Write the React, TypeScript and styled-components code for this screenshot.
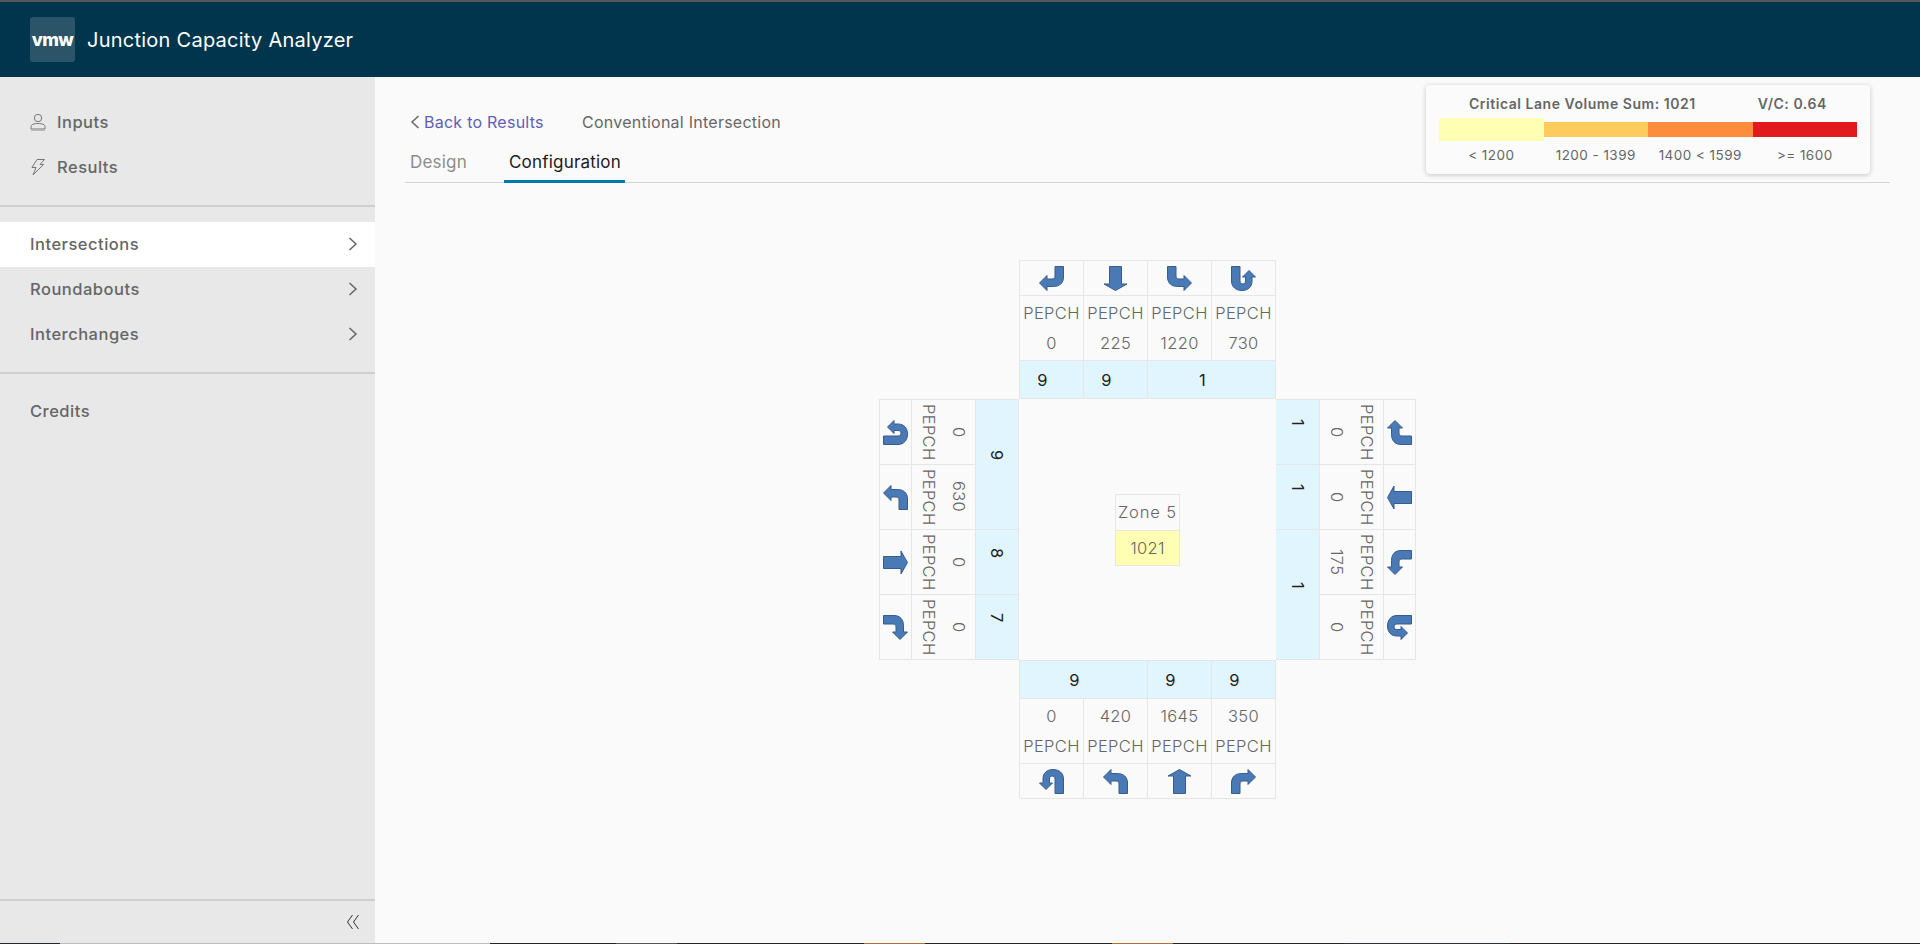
import React from 'react';
import styled, { createGlobalStyle } from 'styled-components';

const GlobalStyle = createGlobalStyle`
  html, body {
    margin: 0;
    padding: 0;
    height: 100%;
    background: #fafafa;
    font-family: 'Inter', 'Liberation Sans', sans-serif;
  }
  * {
    box-sizing: border-box;
  }
`;

const Page = styled.div`
  display: flex;
  flex-direction: column;
  height: 944px;
  overflow: hidden;
`;

const Header = styled.header`
  display: flex;
  align-items: center;
  gap: 12px;
  height: 77px;
  padding: 0 30px;
  background: #00364d;
  border-top: 2px solid #565656;
`;

const Logo = styled.div`
  display: flex;
  align-items: center;
  justify-content: center;
  width: 45px;
  height: 45px;
  border-radius: 3px;
  background: #2b5468;
  color: #fff;
  font-size: 18px;
  font-weight: 800;
  letter-spacing: -0.6px;
`;

const Title = styled.div`
  color: #fff;
  font-size: 20px;
  font-weight: 400;
  letter-spacing: 0.25px;
`;

const Body = styled.div`
  display: flex;
  flex: 1;
  min-height: 0;
`;

const Sidebar = styled.nav`
  display: flex;
  flex-direction: column;
  flex: 0 0 375px;
  background: #e8e8e8;
`;

const NavGroup = styled.div<{ $pad: string }>`
  display: flex;
  flex-direction: column;
  padding: ${(p) => p.$pad};
  border-bottom: 2px solid #cfcfcf;
`;

const NavItem = styled.div<{ $active?: boolean }>`
  display: flex;
  align-items: center;
  gap: 11px;
  height: 45px;
  padding: 0 17px 2px 30px;
  background: ${(p) => (p.$active ? '#fff' : 'transparent')};
  color: #666;
  font-size: 16.5px;
  font-weight: 500;
  letter-spacing: 0.5px;

  svg {
    flex: none;
  }
`;

const NavLabel = styled.span`
  flex: 1;
`;

const CreditsGap = styled.div`
  height: 15px;
`;

const SidebarFoot = styled.div`
  display: flex;
  align-items: center;
  justify-content: flex-end;
  height: 44px;
  margin-top: auto;
  padding-right: 15px;
  border-top: 2px solid #cfcfcf;
`;

const Main = styled.main`
  position: relative;
  flex: 1;
  padding: 0 30px;
  background: #fafafa;
`;

const Crumbs = styled.div`
  display: flex;
  align-items: center;
  height: 30px;
  margin-top: 30px;
  padding-left: 5px;
  font-size: 16px;
  letter-spacing: 0.25px;
  color: #666;
`;

const BackLink = styled.a`
  display: flex;
  align-items: center;
  gap: 4px;
  width: 172px;
  color: #5f60b5;
`;

const Tabs = styled.div`
  display: flex;
  gap: 33px;
  height: 46px;
  border-bottom: 1px solid #d4d4d4;
  font-size: 17px;
  letter-spacing: 0.2px;
`;

const Tab = styled.div<{ $active?: boolean }>`
  height: 46px;
  padding: 13px 4px 0 5px;
  line-height: 24px;
  color: ${(p) => (p.$active ? '#1b1b1b' : '#8c8c8c')};
  border-bottom: 3px solid ${(p) => (p.$active ? '#0079ad' : 'transparent')};
`;

const Legend = styled.aside`
  position: absolute;
  top: 8px;
  right: 50px;
  width: 444px;
  height: 89px;
  padding: 9px 13px 0;
  border-radius: 4px;
  background: #fbfbfb;
  box-shadow: 0 1px 5px rgba(0, 0, 0, 0.22);
  color: #666;
`;

const LegendTitle = styled.div`
  display: flex;
  height: 20px;
  padding-left: 30px;
  font-size: 14px;
  font-weight: 600;
  letter-spacing: 0.53px;
  line-height: 20px;
`;

const LegendVc = styled.span`
  margin-left: 62px;
`;

const LegendBar = styled.div`
  display: flex;
  align-items: center;
  height: 23px;
  margin-top: 4px;
`;

const LegendSwatch = styled.div<{ $color: string; $tall?: boolean }>`
  flex: 1;
  height: ${(p) => (p.$tall ? '23px' : '15px')};
  background: ${(p) => p.$color};
`;

const LegendLabels = styled.div`
  display: flex;
  margin-top: 6px;
  font-size: 13.5px;
  letter-spacing: 0.45px;
  line-height: 16px;
`;

const LegendLabel = styled.div`
  flex: 1;
  text-align: center;
`;

const JunctionWrap = styled.div`
  display: flex;
  justify-content: center;
  margin-top: 77px;
`;

const Junction = styled.div`
  display: grid;
  grid-template-columns: 140px 257px 140px;
  grid-template-rows: 139px 261px 138px;
  color: #666;
  font-size: 16.5px;
  font-weight: 300;
  letter-spacing: 0.35px;
`;

const Approach = styled.div<{ $cols: string; $rows: string; $side?: boolean; $area: string }>`
  display: grid;
  grid-area: ${(p) => p.$area};
  grid-template-columns: ${(p) => p.$cols};
  grid-template-rows: ${(p) => p.$rows};
  writing-mode: ${(p) => (p.$side ? 'vertical-rl' : 'horizontal-tb')};
  border-top: 1px solid #e6e6e6;
  border-left: 1px solid #e6e6e6;
`;

const Cell = styled.div<{ $span?: number }>`
  display: flex;
  flex-direction: column;
  align-items: center;
  justify-content: center;
  grid-column: span ${(p) => p.$span ?? 1};
  border-bottom: 1px solid #e6e6e6;
  border-right: 1px solid #e6e6e6;
  white-space: nowrap;
`;

const PhaseCell = styled(Cell)`
  padding-inline-end: 18px;
  background: #e1f5fe;
  color: #222;
  font-weight: 400;
`;

const CellLine = styled.div`
  block-size: 30px;
  line-height: 30px;
`;

const IconCell = styled(Cell)`
  svg {
    display: block;
  }
`;

const Center = styled.div`
  display: flex;
  grid-area: 2 / 2;
  align-items: center;
  justify-content: center;
`;

const Zone = styled.div`
  display: grid;
  grid-template-rows: 35px 35px;
  width: 65px;
  border: 1px solid #e6e6e6;
  text-align: center;
  line-height: 34px;
`;

const ZoneName = styled.div`
  letter-spacing: 0.9px;
  white-space: nowrap;
`;

const ZoneValue = styled.div`
  border-top: 1px solid #e6e6e6;
  background: #ffffb3;
`;

const TaskStrip = styled.div`
  display: flex;
  flex: 0 0 1px;
`;

const TaskSegment = styled.div<{ $color: string; $grow: number }>`
  flex: ${(p) => p.$grow} 0 0;
  background: ${(p) => p.$color};
`;

type Turn = 'U' | 'L' | 'T' | 'R';

const arrowPaths: Record<Turn, string> = {
  U: 'M16 24.5V10C16 8 14.5 7 13 7C11.5 7 10.5 8 10.5 10V14H13.5L7 20.5L.5 14H4V10C4 4 8 .5 14 .5C20 .5 24.5 4 24.5 10V24.5Z',
  L: 'M24.5 24.5V14C24.5 8 20.5 4.5 14.5 4.5H8V.5L.5 8L8 15.5V12H13C15 12 16 13 16 15V24.5Z',
  T: 'M6.5 24.5V7H1L12.5 .5L24 7H18.5V24.5Z',
  R: 'M.5 24.5V14C.5 8 4.5 4.5 10.5 4.5H17V.5L24.5 8L17 15.5V12H12C10 12 9 13 9 15V24.5Z',
};

const TurnArrow = ({ turn, rotate }: { turn: Turn; rotate: number }) => (
  <svg width="25" height="25" viewBox="0 0 25 25" style={{ transform: `rotate(${rotate}deg)` }}>
    <path d={arrowPaths[turn]} fill="#4a7ab5" stroke="#385d8a" strokeWidth="1" />
  </svg>
);

const UserIcon = () => (
  <svg width="16" height="18" viewBox="0 0 16 18" fill="none" stroke="#777" strokeWidth="1">
    <circle cx="8" cy="5" r="3.7" />
    <path d="M1 16V13.5C1 11.5 4 10.5 8 10.5S15 11.5 15 13.5V16Z" />
    <path d="M1 17.5H15" stroke="#bbb" />
  </svg>
);

const BoltIcon = () => (
  <svg width="16" height="18" viewBox="0 0 16 18" fill="none" stroke="#777" strokeWidth="1">
    <path d="M7 1.5H14.5L10 6.5H13.5L3 17L6 9.5H2Z" />
  </svg>
);

const Chevron = ({ dir = 'right', color = '#666' }: { dir?: 'left' | 'right'; color?: string }) => (
  <svg width="10" height="14" viewBox="0 0 10 14" fill="none" stroke={color} strokeWidth="1.5">
    <path d={dir === 'right' ? 'M1.5 1L8 7L1.5 13' : 'M8.5 1L2 7L8.5 13'} />
  </svg>
);

const DoubleChevron = () => (
  <svg width="14" height="16" viewBox="0 0 14 16" fill="none" stroke="#333" strokeWidth="1">
    <path d="M6.5 1L1.5 8L6.5 15M12.5 1L7.5 8L12.5 15" />
  </svg>
);

type Movement = { turn: Turn; value: number; rotate?: number };
type Phase = { label: number; span: number };

const north: Movement[] = [
  { turn: 'R', value: 0 },
  { turn: 'T', value: 225 },
  { turn: 'L', value: 1220 },
  { turn: 'U', value: 730 },
];
const south: Movement[] = [
  { turn: 'U', value: 0 },
  { turn: 'L', value: 420 },
  { turn: 'T', value: 1645 },
  { turn: 'R', value: 350 },
];
// the left turn of this approach is drawn unrotated in the original
const west: Movement[] = [
  { turn: 'U', value: 0 },
  { turn: 'L', value: 630, rotate: 0 },
  { turn: 'T', value: 0 },
  { turn: 'R', value: 0 },
];
const east: Movement[] = [
  { turn: 'R', value: 0 },
  { turn: 'T', value: 0 },
  { turn: 'L', value: 175 },
  { turn: 'U', value: 0 },
];

const iconCells = (list: Movement[], rotate: number) =>
  list.map((m, i) => (
    <IconCell key={'i' + i}>
      <TurnArrow turn={m.turn} rotate={m.rotate ?? rotate} />
    </IconCell>
  ));

const phaseCells = (list: Phase[]) =>
  list.map((p, i) => (
    <PhaseCell key={'p' + i} $span={p.span}>
      {p.label}
    </PhaseCell>
  ));

const taskSegments: [string, number][] = [
  ['#1f2a33', 60],
  ['#bdbdbd', 430],
  ['#23262a', 126],
  ['#565656', 61],
  ['#23262a', 187],
  ['#b5722f', 61],
  ['#23262a', 187],
  ['#b5722f', 61],
  ['#23262a', 172],
  ['#26333a', 165],
  ['#23262a', 410],
];

const legend = [
  { color: '#ffffb3', label: '< 1200', tall: true },
  { color: '#fecc5c', label: '1200 - 1399' },
  { color: '#fd8d3c', label: '1400 < 1599' },
  { color: '#e31a1c', label: '>= 1600' },
];

export default function App() {
  return (
    <Page>
      <GlobalStyle />
      <Header>
        <Logo>vmw</Logo>
        <Title>Junction Capacity Analyzer</Title>
      </Header>
      <Body>
        <Sidebar>
          <NavGroup $pad="23px 0 15px">
            <NavItem>
              <UserIcon />
              <NavLabel>Inputs</NavLabel>
            </NavItem>
            <NavItem>
              <BoltIcon />
              <NavLabel>Results</NavLabel>
            </NavItem>
          </NavGroup>
          <NavGroup $pad="15px 0 15px">
            <NavItem $active>
              <NavLabel>Intersections</NavLabel>
              <Chevron />
            </NavItem>
            <NavItem>
              <NavLabel>Roundabouts</NavLabel>
              <Chevron />
            </NavItem>
            <NavItem>
              <NavLabel>Interchanges</NavLabel>
              <Chevron />
            </NavItem>
          </NavGroup>
          <CreditsGap />
          <NavItem>
            <NavLabel>Credits</NavLabel>
          </NavItem>
          <SidebarFoot>
            <DoubleChevron />
          </SidebarFoot>
        </Sidebar>
        <Main>
          <Crumbs>
            <BackLink>
              <Chevron dir="left" />
              Back to Results
            </BackLink>
            Conventional Intersection
          </Crumbs>
          <Tabs>
            <Tab>Design</Tab>
            <Tab $active>Configuration</Tab>
          </Tabs>
          <Legend>
            <LegendTitle>
              Critical Lane Volume Sum: 1021
              <LegendVc>V/C: 0.64</LegendVc>
            </LegendTitle>
            <LegendBar>
              {legend.map((l) => (
                <LegendSwatch key={l.color} $color={l.color} $tall={l.tall} />
              ))}
            </LegendBar>
            <LegendLabels>
              {legend.map((l) => (
                <LegendLabel key={l.color}>{l.label}</LegendLabel>
              ))}
            </LegendLabels>
          </Legend>
          <JunctionWrap>
            <Junction>
              <Approach $area="1 / 2" $cols="repeat(4, 64px)" $rows="35px 65px 38px">
                {iconCells(north, 180)}
                {north.map((m, i) => (
                  <Cell key={i}>
                    <CellLine>PEPCH</CellLine>
                    <CellLine>{m.value}</CellLine>
                  </Cell>
                ))}
                {phaseCells([
                  { label: 9, span: 1 },
                  { label: 9, span: 1 },
                  { label: 1, span: 2 },
                ])}
              </Approach>
              <Approach $area="2 / 1" $side $cols="repeat(4, 65px)" $rows="43px 64px 32px">
                {phaseCells([
                  { label: 9, span: 2 },
                  { label: 8, span: 1 },
                  { label: 7, span: 1 },
                ])}
                {west.map((m, i) => (
                  <Cell key={i}>
                    <CellLine>{m.value}</CellLine>
                    <CellLine>PEPCH</CellLine>
                  </Cell>
                ))}
                {iconCells(west, 90)}
              </Approach>
              <Center>
                <Zone>
                  <ZoneName>Zone 5</ZoneName>
                  <ZoneValue>1021</ZoneValue>
                </Zone>
              </Center>
              <Approach $area="2 / 3" $side $cols="repeat(4, 65px)" $rows="32px 64px 44px">
                {iconCells(east, -90)}
                {east.map((m, i) => (
                  <Cell key={i}>
                    <CellLine>PEPCH</CellLine>
                    <CellLine>{m.value}</CellLine>
                  </Cell>
                ))}
                {phaseCells([
                  { label: 1, span: 1 },
                  { label: 1, span: 1 },
                  { label: 1, span: 2 },
                ])}
              </Approach>
              <Approach $area="3 / 2" $cols="repeat(4, 64px)" $rows="38px 65px 35px">
                {phaseCells([
                  { label: 9, span: 2 },
                  { label: 9, span: 1 },
                  { label: 9, span: 1 },
                ])}
                {south.map((m, i) => (
                  <Cell key={i}>
                    <CellLine>{m.value}</CellLine>
                    <CellLine>PEPCH</CellLine>
                  </Cell>
                ))}
                {iconCells(south, 0)}
              </Approach>
            </Junction>
          </JunctionWrap>
        </Main>
      </Body>
      <TaskStrip>
        {taskSegments.map(([color, grow], i) => (
          <TaskSegment key={i} $color={color} $grow={grow} />
        ))}
      </TaskStrip>
    </Page>
  );
}
